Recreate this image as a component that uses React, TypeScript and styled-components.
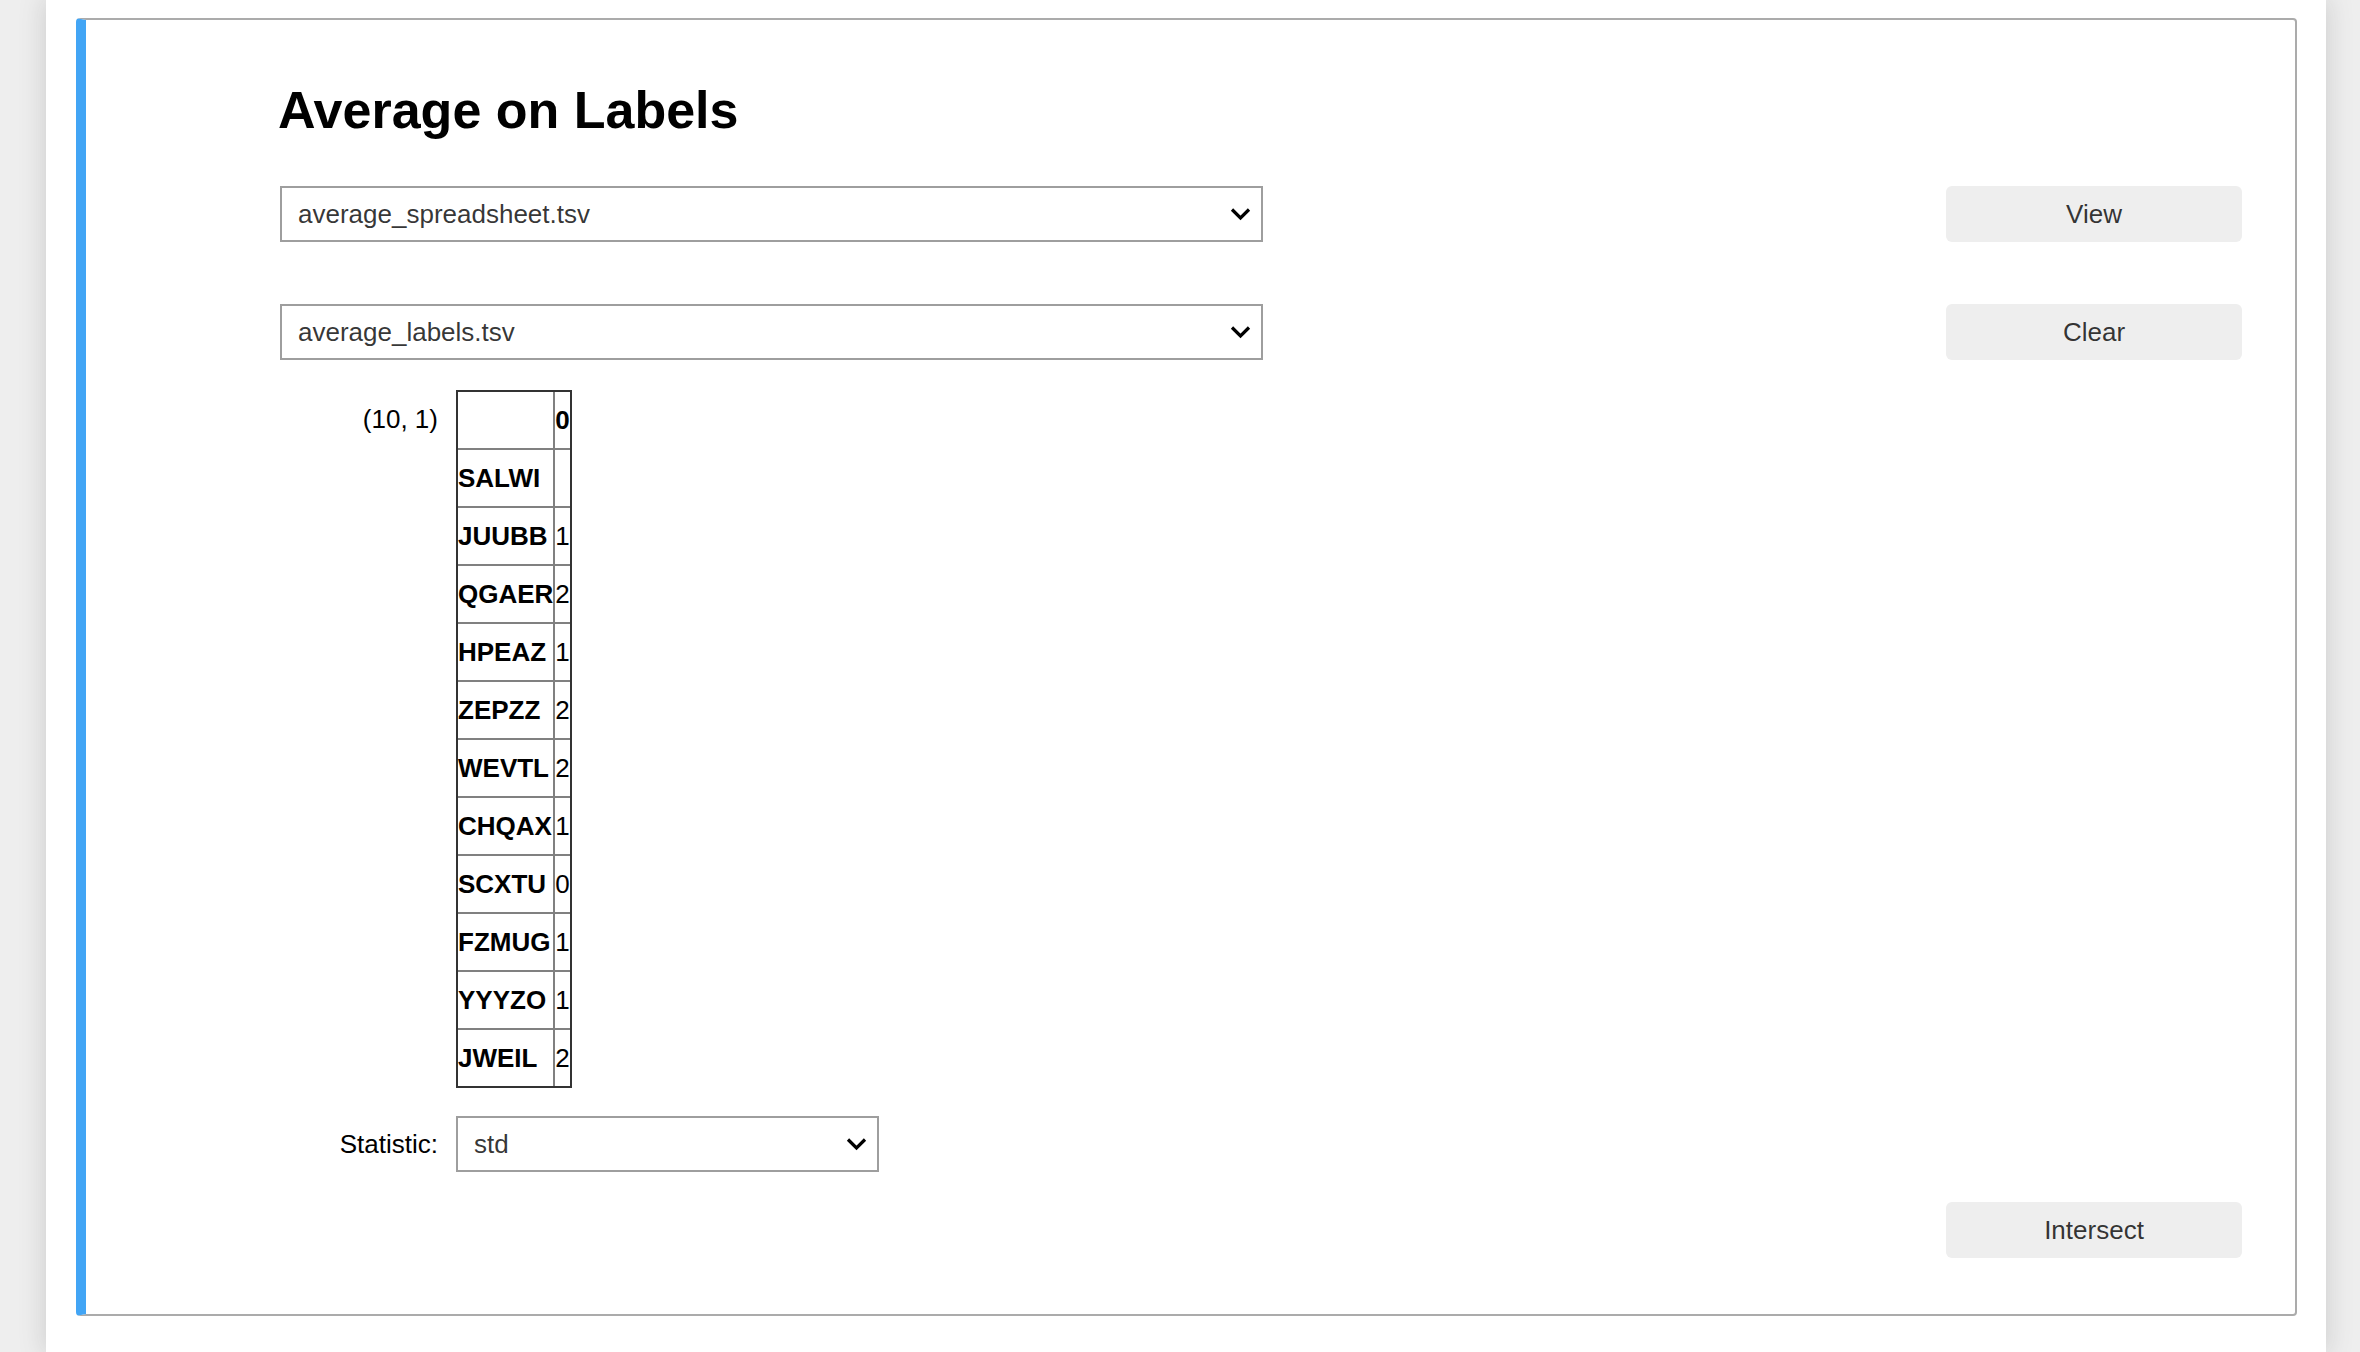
import styled, { createGlobalStyle } from "styled-components";

const GlobalStyle = createGlobalStyle`
  html, body {
    margin: 0;
    padding: 0;
    background: #eeeeee;
    overflow: hidden;
  }
  body {
    font-family: "Liberation Sans", Arial, Helvetica, sans-serif;
  }
`;

const Notebook = styled.div`
  box-sizing: border-box;
  margin-left: 46px;
  width: 2280px;
  height: 1352px;
  padding: 18px 29px 0 30px;
  background: #ffffff;
  box-shadow: 0 0 24px 2px rgba(87, 87, 87, 0.2);
`;

const Cell = styled.div`
  box-sizing: border-box;
  display: flex;
  flex-direction: column;
  border: 2px solid #ababab;
  border-left: 10px solid #42a5f5;
  border-radius: 4px;
  padding: 60px 53px 56px 194px;
`;

const Title = styled.h1`
  margin: 0 0 0 -2px;
  font-size: 52px;
  line-height: 60px;
  font-weight: 700;
  color: #000;
`;

const Row = styled.div<{ $top: number; $justify?: string }>`
  display: flex;
  align-items: center;
  justify-content: ${(p) => p.$justify || "space-between"};
  margin-top: ${(p) => p.$top}px;
`;

const OutputRow = styled.div<{ $top: number }>`
  display: flex;
  align-items: flex-start;
  gap: 18px;
  margin-top: ${(p) => p.$top}px;
`;

const FieldRow = styled.div<{ $top: number }>`
  display: flex;
  align-items: center;
  gap: 18px;
  margin-top: ${(p) => p.$top}px;
`;

const SideLabel = styled.div<{ $pad?: number }>`
  width: 158px;
  flex: none;
  text-align: right;
  font-size: 26px;
  line-height: 30px;
  color: #000;
  padding-top: ${(p) => p.$pad || 0}px;
`;

const SelectBox = styled.div<{ $width: number }>`
  box-sizing: border-box;
  display: flex;
  align-items: center;
  justify-content: space-between;
  width: ${(p) => p.$width}px;
  height: 56px;
  padding: 0 10px 0 16px;
  border: 2px solid #9e9e9e;
  background: #fff;
  font-size: 26px;
  color: rgba(0, 0, 0, 0.8);
`;

const Button = styled.button`
  width: 296px;
  height: 56px;
  padding: 0;
  border: none;
  border-radius: 6px;
  background: #eeeeee;
  font-family: inherit;
  font-size: 26px;
  color: rgba(0, 0, 0, 0.8);
`;

const Table = styled.table`
  border-collapse: separate;
  border-spacing: 0;
  border: 2px solid #333;
  font-size: 26px;
  line-height: 30px;
  color: #000;
`;

const Tr = styled.tr<{ $first?: boolean }>`
  height: ${(p) => (p.$first ? 56 : 58)}px;
`;

const Cellx = styled.td<{ $first?: boolean; $index?: boolean; $bold?: boolean }>`
  padding: 0;
  vertical-align: middle;
  white-space: nowrap;
  text-align: ${(p) => (p.$index ? "left" : "right")};
  font-weight: ${(p) => (p.$bold ? 700 : 400)};
  border-top: ${(p) => (p.$first ? "none" : "2px solid #808080")};
  border-right: ${(p) => (p.$index ? "2px solid #808080" : "none")};
`;

function Chevron() {
  return (
    <svg width="21" height="14" viewBox="0 0 21 14">
      <path d="M2 2.5 L10.5 11 L19 2.5" fill="none" stroke="#000" strokeWidth="3.2" />
    </svg>
  );
}

function Select({ value, width }: { value: string; width: number }) {
  return (
    <SelectBox $width={width}>
      <span>{value}</span>
      <Chevron />
    </SelectBox>
  );
}

const rows: [string, string][] = [
  ["SALWI", ""],
  ["JUUBB", "1"],
  ["QGAER", "2"],
  ["HPEAZ", "1"],
  ["ZEPZZ", "2"],
  ["WEVTL", "2"],
  ["CHQAX", "1"],
  ["SCXTU", "0"],
  ["FZMUG", "1"],
  ["YYYZO", "1"],
  ["JWEIL", "2"],
];

export default function App() {
  return (
    <>
      <GlobalStyle />
      <Notebook>
        <Cell>
          <Title>Average on Labels</Title>
          <Row $top={46}>
            <Select value="average_spreadsheet.tsv" width={983} />
            <Button>View</Button>
          </Row>
          <Row $top={62}>
            <Select value="average_labels.tsv" width={983} />
            <Button>Clear</Button>
          </Row>
          <OutputRow $top={30}>
            <SideLabel $pad={14}>(10, 1)</SideLabel>
            <Table>
              <tbody>
                <Tr $first>
                  <Cellx as="th" $first $index $bold />
                  <Cellx as="th" $first $bold>0</Cellx>
                </Tr>
                {rows.map(([label, val]) => (
                  <Tr key={label}>
                    <Cellx as="th" $index $bold>{label}</Cellx>
                    <Cellx>{val}</Cellx>
                  </Tr>
                ))}
              </tbody>
            </Table>
          </OutputRow>
          <FieldRow $top={28}>
            <SideLabel>Statistic:</SideLabel>
            <Select value="std" width={423} />
          </FieldRow>
          <Row $top={30} $justify="flex-end">
            <Button>Intersect</Button>
          </Row>
        </Cell>
      </Notebook>
    </>
  );
}
